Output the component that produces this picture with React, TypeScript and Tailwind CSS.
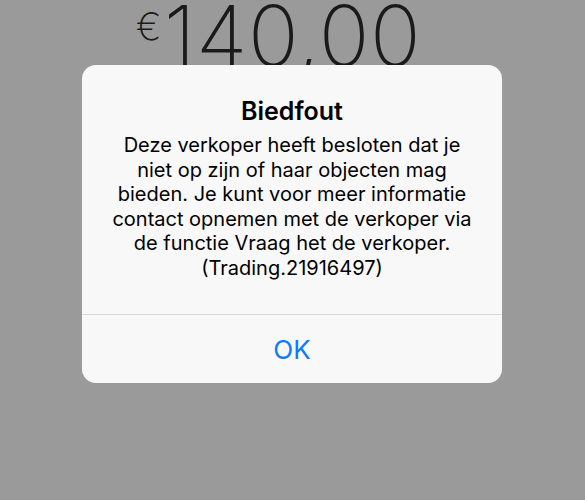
export default function App() {
  return (
    <div className="relative h-[500px] w-[585px] overflow-hidden bg-[#9a9a9a]" style={{ fontFamily: "Inter, 'Noto Sans', sans-serif" }}>
      {/* Amount behind the alert */}
      <div className="flex justify-center pr-[28px] -mt-[6px]">
        <div className="flex items-start text-[#1a1a1a]">
          <span className="mt-[13px] mr-[2px] text-[38px] font-extralight leading-none">€</span>
          <span className="text-[84px] font-extralight leading-none tracking-[0.5px]">140,00</span>
        </div>
      </div>

      {/* Alert */}
      <div className="absolute left-[82px] top-[65px] w-[420px] overflow-hidden rounded-[14px] bg-[#f8f8f8]">
        <div className="flex flex-col items-center px-4 pt-[32px] pb-[34px] text-center text-black">
          <h2 className="text-[25px] font-semibold leading-[28px]">Biedfout</h2>
          <p className="mt-[8px] text-[20px] leading-[24.5px]">
            Deze verkoper heeft besloten dat je
            <br />
            niet op zijn of haar objecten mag
            <br />
            bieden. Je kunt voor meer informatie
            <br />
            contact opnemen met de verkoper via
            <br />
            de functie Vraag het de verkoper.
            <br />
            (Trading.21916497)
          </p>
        </div>
        <div className="h-px bg-[#d9d9d9]" />
        <button className="flex h-[68px] w-full items-center justify-center text-[26px] text-[#0a7aff]">OK</button>
      </div>
    </div>
  );
}
